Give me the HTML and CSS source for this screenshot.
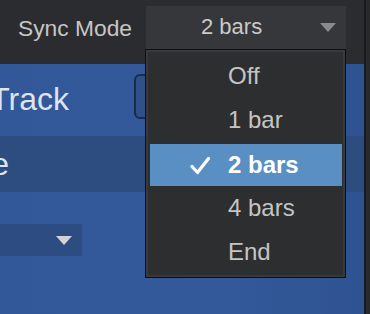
FILE: index.html
```html
<!DOCTYPE html>
<html lang="en">
<head>
    <meta charset="UTF-8">
    <meta name="viewport" content="width=device-width, initial-scale=1.0">
    <title>Sync Mode</title>
    <link rel="stylesheet" href="styles.css">
</head>
<body>
    <div class="app">
        <div class="main">
            <div class="topbar">
                <span class="label">Sync Mode</span>
                <div class="select">
                    <span class="select-value">2 bars</span>
                    <span class="arrow arrow-dim"></span>
                </div>
            </div>

            <div class="panel">
                <div class="track-row">
                    <div class="clip clip-track"><span class="track-name">Audio Track</span></div>
                    <div class="track-box"></div>
                </div>
                <div class="band">
                    <div class="clip clip-band"><span class="band-name">Tempo Mode</span></div>
                </div>
                <div class="combo">
                    <span class="arrow arrow-light"></span>
                </div>
            </div>
        </div>
        <div class="edge"></div>
    </div>

    <ul class="menu">
        <li><span class="check"></span>Off</li>
        <li><span class="check"></span>1 bar</li>
        <li class="selected">
            <span class="check">
                <svg width="20" height="18" viewBox="0 0 20 18">
                    <path d="M2 9.5 L7.5 15.5 L18.5 1.5" fill="none" stroke="#ffffff" stroke-width="3.2" stroke-linecap="round" stroke-linejoin="round"/>
                </svg>
            </span>2 bars
        </li>
        <li><span class="check"></span>4 bars</li>
        <li><span class="check"></span>End</li>
    </ul>
</body>
</html>
```

FILE: styles.css
```css
body {
    margin: 0;
    width: 370px;
    height: 314px;
    overflow: hidden;
    background-color: #2b2c2f;
    font-family: "Liberation Sans", Arial, sans-serif;
    position: relative;
}
.app {
    display: flex;
    height: 314px;
}
.main {
    width: 364px;
    display: flex;
    flex-direction: column;
}
.edge {
    flex-grow: 1;
    border-left: 2px solid #171a21;
    background: #28292b;
}

/* barra de cima */
.topbar {
    height: 64px;
    display: flex;
    align-items: flex-start;
    padding-top: 6px;
    box-sizing: border-box;
    background: #2b2c2f;
}
.label {
    font-size: 22.8px;
    line-height: 44px;
    color: #c6c6c6;
    padding-left: 18px;
    width: 128px;
}
.select {
    width: 200px;
    height: 44px;
    background: #36373a;
    display: flex;
    align-items: center;
    padding-left: 55px;
    padding-right: 10px;
    box-sizing: border-box;
}
.select-value {
    font-size: 22px;
    color: #cacaca;
    flex-grow: 1;
    margin-top: -3px;
}
.arrow {
    width: 0;
    height: 0;
    border-left: 8px solid transparent;
    border-right: 8px solid transparent;
}
.arrow-dim {
    border-top: 9px solid #8a8a8c;
    margin-top: -2px;
}
.arrow-light {
    border-top: 9px solid #d3d3d5;
}

/* painel azul */
.panel {
    flex-grow: 1;
    background: linear-gradient(90deg, #32589a, #33599b 60%, #2f5391);
    display: flex;
    flex-direction: column;
}
.clip {
    display: flex;
    justify-content: flex-end;
    white-space: nowrap;
}
.track-row {
    height: 72px;
    display: flex;
    align-items: flex-start;
    padding-top: 10px;
    box-sizing: border-box;
}
.clip-track {
    width: 69px;
}
.track-name {
    font-size: 32px;
    line-height: 50px;
    color: #dfe4ec;
}
.track-box {
    margin-left: 65px;
    width: 60px;
    height: 45px;
    box-sizing: border-box;
    border: 2px solid #1a2b4b;
    border-radius: 6px;
    background: #2e5189;
}
.band {
    height: 56px;
    background: #2d4d81;
}
.clip-band {
    width: 9px;
}
.band-name {
    font-size: 32px;
    line-height: 56px;
    color: #dfe4ec;
}
.combo {
    margin-top: 32px;
    width: 82px;
    height: 32px;
    background: #2d4d82;
    display: flex;
    align-items: center;
    justify-content: flex-end;
    padding-right: 10px;
    box-sizing: border-box;
}

/* menu aberto */
.menu {
    position: absolute;
    left: 145px;
    top: 49px;
    width: 201px;
    margin: 0;
    padding: 4px 3px 3px 4px;
    list-style: none;
    box-sizing: border-box;
    background: #2d2e30;
    border: 1px solid #0f0f10;
    box-shadow: inset 0 0 0 2px #38393b;
}
.menu li {
    height: 44px;
    line-height: 44px;
    font-size: 24px;
    color: #c5c5c5;
    padding-left: 40px;
    display: flex;
    align-items: center;
}
.check {
    width: 38px;
    display: flex;
    align-items: center;
}
.menu li.selected {
    background: #5a8fc3;
    color: #ffffff;
    font-weight: bold;
    height: 42px;
    margin-top: 2px;
    line-height: 42px;
}
.menu li.selected .check {
    margin-top: 2px;
}
```
